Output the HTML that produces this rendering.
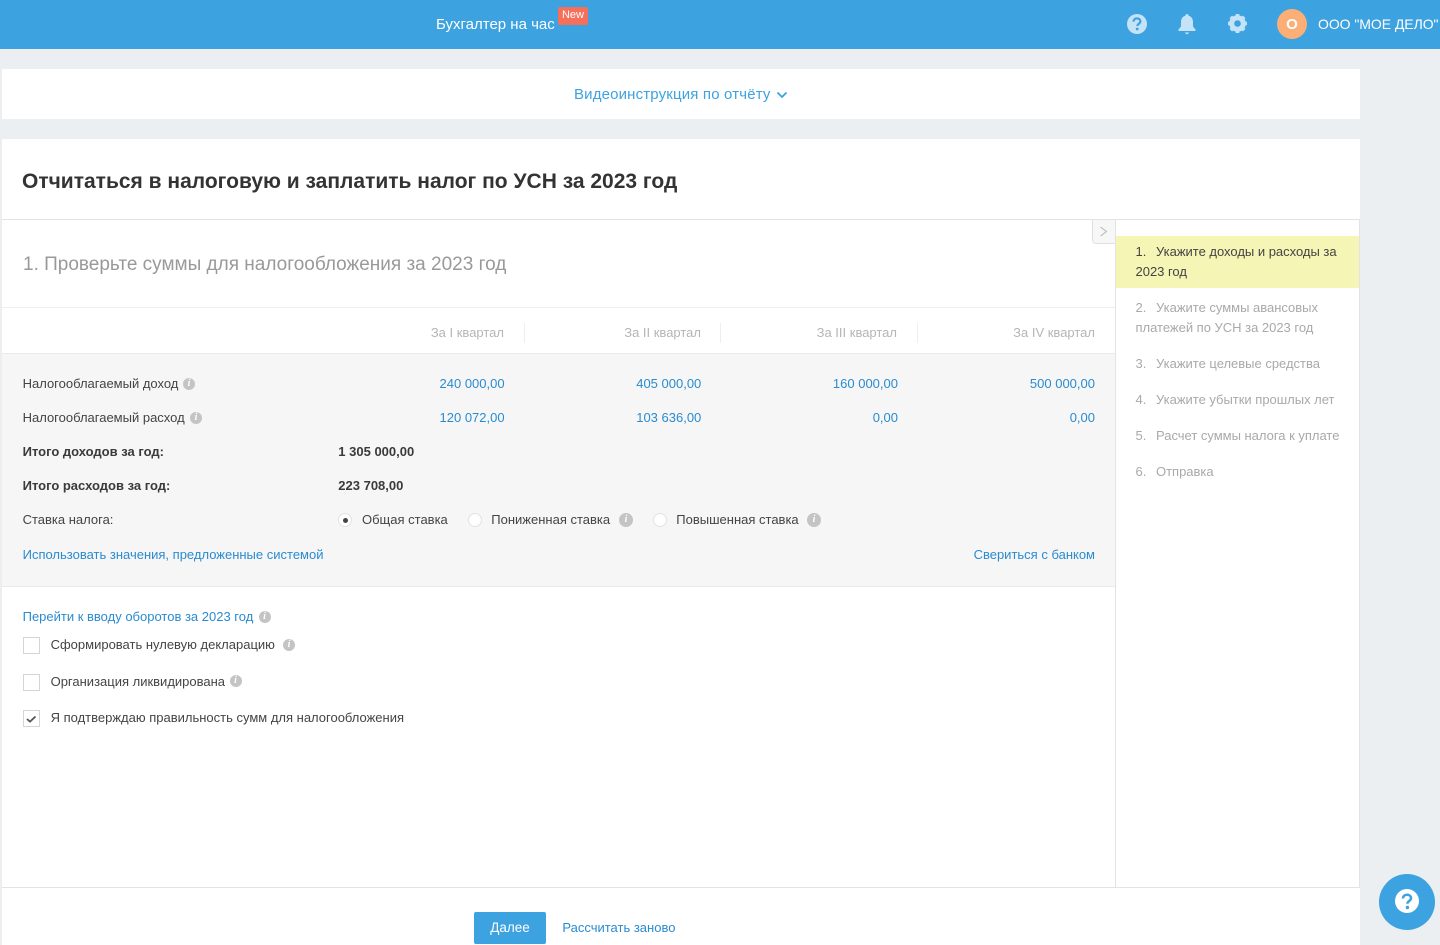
<!DOCTYPE html>
<html lang="ru"><head><meta charset="utf-8"><title>УСН</title>
<style>
html,body{margin:0;padding:0;width:1440px;height:945px;overflow:hidden;background:#ebeff2;font-family:"Liberation Sans",sans-serif;color:#444}
.a{position:absolute;white-space:nowrap}
.t{font-size:13px;line-height:16px}
.r{text-align:right}
.b{color:#2a8bd0}
.h{color:#b5b5b5}
.bold{font-weight:bold;color:#3a3a3a}
.g{color:#a9a9a9;font-size:13px;line-height:20px;left:1135.5px;width:215px;white-space:normal;letter-spacing:-.01px}
.g span{display:inline-block;width:20.5px}
.i{position:absolute;width:12px;height:12px;border-radius:50%;background:#c4c4c4;color:#fff;font:italic bold 10px/12px "Liberation Serif",serif;text-align:center}
.rd{position:absolute;width:12px;height:12px;border-radius:50%;background:#fff;border:1px solid #e2e2e2}
.cb{position:absolute;width:15px;height:15px;background:#fff;border:1px solid #d5d5d5}
.l{position:absolute;background:#e3e3e3}
</style></head><body>
<div class="a" style="left:0;top:0;width:1440px;height:49px;background:#3ca2e0"></div>
<div class="a" style="left:436px;top:16px;font-size:15px;line-height:18px;color:#fff">Бухгалтер на час</div>
<div class="a" style="left:558px;top:7px;width:30px;height:18px;background:#f66f5b;border-radius:2px;color:#fff;font-size:11px;line-height:17px;text-align:center">New</div>
<svg class="a" style="left:1126px;top:13px" width="22" height="22" viewBox="0 0 22 22"><circle cx="11" cy="11" r="10" fill="#c5e3f7"/><path d="M7.6 8.6c0-2 1.5-3.2 3.4-3.2s3.4 1.1 3.4 2.9c0 2.4-3 2.4-3 4.7" fill="none" stroke="#3ca2e0" stroke-width="2.2"/><circle cx="11.2" cy="16" r="1.4" fill="#3ca2e0"/></svg>
<svg class="a" style="left:1177px;top:13px" width="20" height="22" viewBox="0 0 20 22"><path d="M10 1a1.6 1.6 0 0 1 1.6 1.8C14.6 3.6 16 6 16 9v4.5l2.5 3V18h-17v-1.5l2.500-3V9c0-3 1.400-5.400 4.400-6.200A1.600 1.600 0 0 1 10 1z" fill="#c5e3f7"/><path d="M7.500 19.500h5L10 21.500z" fill="#c5e3f7"/></svg>
<svg class="a" style="left:1227px;top:13px" width="21" height="21" viewBox="0 0 21 21"><circle cx="10.500" cy="10.500" r="5.800" fill="none" stroke="#c5e3f7" stroke-width="5"/><path d="M10.500 1v19M1 10.500h19M3.800 3.800l13.400 13.400M17.200 3.800L3.800 17.200" stroke="#c5e3f7" stroke-width="3.600" stroke-dasharray="3.400 12.200 3.400"/></svg>
<div class="a" style="left:1277px;top:9px;width:30px;height:30px;border-radius:50%;background:#fcae77;color:#fff;font-weight:bold;font-size:15px;line-height:31px;text-align:center">О</div>
<div class="a" style="left:1318px;top:15px;font-size:14px;line-height:18px;color:#fff;letter-spacing:-.05px">ООО "МОЕ ДЕЛО"</div>

<div class="a" style="left:2px;top:69px;width:1358px;height:50px;background:#fff"></div>
<div class="a" style="left:574px;top:86px;font-size:15px;line-height:18px;color:#3ca2e0;letter-spacing:.16px">Видеоинструкция по отчёту</div>
<svg class="a" style="left:776px;top:91px" width="12" height="8" viewBox="0 0 12 8"><path d="M1.500 1.500L6 6l4.500-4.500" fill="none" stroke="#3ca2e0" stroke-width="1.800"/></svg>

<div class="a" style="left:2px;top:139px;width:1358px;height:806px;background:#fff"></div>
<div class="a" style="left:22px;top:169px;font-size:21px;line-height:26px;font-weight:bold;color:#333">Отчитаться в налоговую и заплатить налог по УСН за 2023 год</div>
<div class="l" style="left:2px;top:219px;width:1358px;height:1px"></div>
<div class="l" style="left:1115px;top:220px;width:1px;height:667px"></div>
<div class="l" style="left:1359px;top:220px;width:1px;height:667px"></div>
<div class="l" style="left:2px;top:887px;width:1358px;height:1px"></div>

<div class="a" style="left:1092px;top:220px;width:22px;height:23px;background:#f7f7f7;border:1px solid #e0e0e0;border-top:0;border-right:0;border-bottom-left-radius:4px"></div>
<svg class="a" style="left:1099px;top:226px" width="10" height="12" viewBox="0 0 10 12"><path d="M1.500 1L7.500 5.500L1.500 10" fill="none" stroke="#b5b5b5" stroke-width="1"/></svg>

<div class="a" style="left:1116px;top:236px;width:243px;height:52px;background:#f5f5b5"></div>
<div class="a g" style="top:242px;color:#444"><span>1.</span>Укажите доходы и расходы за 2023 год</div>
<div class="a g" style="top:298px"><span>2.</span>Укажите суммы авансовых платежей по УСН за 2023 год</div>
<div class="a g" style="top:354px"><span>3.</span>Укажите целевые средства</div>
<div class="a g" style="top:390px"><span>4.</span>Укажите убытки прошлых лет</div>
<div class="a g" style="top:426px"><span>5.</span>Расчет суммы налога к уплате</div>
<div class="a g" style="top:462px"><span>6.</span>Отправка</div>

<div class="a" style="left:23px;top:253px;font-size:19px;line-height:24px;color:#999">1. Проверьте суммы для налогообложения за 2023 год</div>
<div class="l" style="left:2px;top:307px;width:1113px;height:1px;background:#eee"></div>
<div class="a t h r" style="left:304px;width:200px;top:325px">За I квартал</div>
<div class="a t h r" style="left:501px;width:200px;top:325px">За II квартал</div>
<div class="a t h r" style="left:697px;width:200px;top:325px">За III квартал</div>
<div class="a t h r" style="left:895px;width:200px;top:325px">За IV квартал</div>
<div class="l" style="left:524px;top:323px;width:1px;height:20px;background:#eee"></div>
<div class="l" style="left:720px;top:323px;width:1px;height:20px;background:#eee"></div>
<div class="l" style="left:917px;top:323px;width:1px;height:20px;background:#eee"></div>

<div class="a" style="left:2px;top:353px;width:1113px;background:#f6f6f6;border-top:1px solid #eaeaea;border-bottom:1px solid #eaeaea;box-sizing:border-box;height:234px"></div>
<div class="a t" style="left:22.600px;top:376px">Налогооблагаемый доход</div><div class="i" style="left:183px;top:378px">i</div>
<div class="a t" style="left:22.600px;top:410px">Налогооблагаемый расход</div><div class="i" style="left:190px;top:412px">i</div>
<div class="a t b r" style="left:304.600px;width:200px;top:376px">240 000,00</div>
<div class="a t b r" style="left:501.300px;width:200px;top:376px">405 000,00</div>
<div class="a t b r" style="left:698px;width:200px;top:376px">160 000,00</div>
<div class="a t b r" style="left:895px;width:200px;top:376px">500 000,00</div>
<div class="a t b r" style="left:304.600px;width:200px;top:410px">120 072,00</div>
<div class="a t b r" style="left:501.300px;width:200px;top:410px">103 636,00</div>
<div class="a t b r" style="left:698px;width:200px;top:410px">0,00</div>
<div class="a t b r" style="left:895px;width:200px;top:410px">0,00</div>
<div class="a t bold" style="left:22.600px;top:444px">Итого доходов за год:</div>
<div class="a t bold" style="left:338.300px;top:444px">1 305 000,00</div>
<div class="a t bold" style="left:22.600px;top:478px">Итого расходов за год:</div>
<div class="a t bold" style="left:338.300px;top:478px">223 708,00</div>
<div class="a t" style="left:22.600px;top:512px">Ставка налога:</div>
<div class="rd" style="left:338px;top:513px"></div><div class="a" style="left:342.500px;top:517.500px;width:5px;height:5px;border-radius:50%;background:#444"></div>
<div class="a t" style="left:362px;top:512px">Общая ставка</div>
<div class="rd" style="left:468px;top:513px"></div>
<div class="a t" style="left:491.300px;top:512px">Пониженная ставка</div><div class="i" style="left:619px;top:513px;width:14px;height:14px;line-height:14px">i</div>
<div class="rd" style="left:653px;top:513px"></div>
<div class="a t" style="left:676.300px;top:512px">Повышенная ставка</div><div class="i" style="left:807px;top:513px;width:14px;height:14px;line-height:14px">i</div>
<div class="a t b" style="left:22.600px;top:547px">Использовать значения, предложенные системой</div>
<div class="a t b r" style="left:895px;width:200px;top:547px">Свериться с банком</div>

<div class="a t b" style="left:22.600px;top:609px">Перейти к вводу оборотов за 2023 год</div><div class="i" style="left:258.500px;top:611px">i</div>
<div class="cb" style="left:23px;top:637px"></div>
<div class="a t" style="left:50.600px;top:637px">Сформировать нулевую декларацию</div><div class="i" style="left:283px;top:639px">i</div>
<div class="cb" style="left:23px;top:674px"></div>
<div class="a t" style="left:50.600px;top:674px">Организация ликвидирована</div><div class="i" style="left:229.500px;top:675px">i</div>
<div class="cb" style="left:23px;top:710px"></div>
<svg class="a" style="left:25px;top:713px" width="13" height="12" viewBox="0 0 13 12"><path d="M2 6l3 2.700L10.500 3.500" fill="none" stroke="#555" stroke-width="1.800"/></svg>
<div class="a t" style="left:50.600px;top:710px">Я подтверждаю правильность сумм для налогообложения</div>

<div class="a" style="left:474px;top:912px;width:72px;height:32px;background:#3ca2e0;border-radius:2px;color:#fff;font-size:13.500px;line-height:32px;text-align:center">Далее</div>
<div class="a t b" style="left:562.400px;top:920px">Рассчитать заново</div>

<div class="a" style="left:1379px;top:874px;width:56px;height:56px;border-radius:50%;background:#3ca2e0"></div>
<svg class="a" style="left:1395px;top:889px" width="24" height="24" viewBox="0 0 24 24"><circle cx="12" cy="12" r="12" fill="#fff"/><path d="M8 9.500c0-2.400 1.800-3.700 4-3.700s4 1.300 4 3.400c0 2.800-3.600 2.800-3.600 5.500" fill="none" stroke="#3ca2e0" stroke-width="2.500"/><circle cx="12.400" cy="18.500" r="1.700" fill="#3ca2e0"/></svg>
</body></html>
